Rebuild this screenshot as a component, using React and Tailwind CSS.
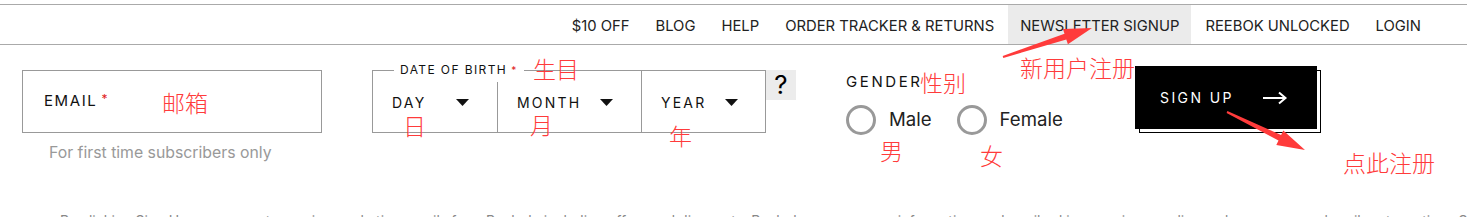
import React from 'react';

const navItems = ['$10 OFF', 'BLOG', 'HELP', 'ORDER TRACKER & RETURNS', 'NEWSLETTER SIGNUP', 'REEBOK UNLOCKED', 'LOGIN'];

const Caret = () => (
    <svg width="13" height="7" viewBox="0 0 13 7" className="shrink-0">
        <polygon points="0,0 13,0 6.5,7" fill="#111" />
    </svg>
);

const Note = ({ x, y, children }) => (
    <span
        className="absolute leading-none text-[23px] text-[#ff3b3b] font-['Noto_Sans_CJK_SC',sans-serif] font-light whitespace-nowrap"
        style={{ left: x, top: y }}
    >
        {children}
    </span>
);

const App = () => {
    return (
        <div className="relative w-[1467px] h-[217px] overflow-hidden bg-white font-['Inter','Liberation_Sans',sans-serif] text-[#222]">
            <div className="h-[4px]" />

            {/* top utility nav */}
            <nav className="h-[41px] border-y border-y-[#aaa] flex justify-end items-stretch pr-[33px] text-[14.8px]">
                {navItems.map((item) => (
                    <div
                        key={item}
                        className={
                            item === 'NEWSLETTER SIGNUP'
                                ? 'flex items-center pt-[3px] px-[12px] mx-[1px] bg-[#ebebeb]'
                                : 'flex items-center pt-[3px] px-[13px]'
                        }
                    >
                        {item}
                    </div>
                ))}
            </nav>

            {/* newsletter form */}
            <div className="flex items-start pt-[21px]">
                <div className="ml-[22px] mt-[4px] w-[300px]">
                    <div className="h-[63px] border border-[#999] flex items-center pl-[21px] text-[15px] tracking-[1.6px] text-[#111]">
                        EMAIL<span className="text-[#e02020] text-[12px] ml-[4px] -mt-[6px]">*</span>
                    </div>
                    <p className="mt-[10px] pl-[27px] text-[15.8px] text-[#999] leading-[20px]">For first time subscribers only</p>
                </div>

                <div className="ml-[50px] mt-[4px] relative w-[394px] h-[63px] border border-[#999] flex text-[14px] tracking-[2.2px] text-[#111]">
                    <span className="absolute -top-[8px] left-[21px] bg-white px-[6px] text-[12px] tracking-[1.4px] leading-[14px]">
                        DATE OF BIRTH<span className="text-[#e02020] text-[10px] ml-[4px]">*</span>
                    </span>
                    <div className="w-[124px] flex items-center justify-between pl-[19px] pr-[28px] pt-[2px]">
                        DAY<Caret />
                    </div>
                    <div className="w-px bg-[#999] mt-[11px]" />
                    <div className="w-[143px] flex items-center justify-between pl-[19px] pr-[28px] pt-[2px]">
                        MONTH<Caret />
                    </div>
                    <div className="w-px bg-[#999]" />
                    <div className="flex-1 flex items-center justify-between pl-[19px] pr-[27px] pt-[2px]">
                        YEAR<Caret />
                    </div>
                </div>
                <div className="mt-[4px] w-[30px] h-[30px] bg-[#ececec] flex items-center justify-center text-[26px] text-black leading-none">?</div>

                <div className="ml-[50px] mt-[4px]">
                    <div className="text-[15px] tracking-[2.6px] leading-[24px] text-[#111]">GENDER</div>
                    <div className="mt-[11px] flex items-center text-[18.6px] text-[#222]">
                        <span className="w-[30px] h-[30px] rounded-full border-[3px] border-[#999]" />
                        <span className="ml-[13px]">Male</span>
                        <span className="ml-[25px] w-[30px] h-[30px] rounded-full border-[3px] border-[#999]" />
                        <span className="ml-[13px]">Female</span>
                    </div>
                </div>

                <button className="ml-auto mr-[150px] w-[182px] h-[63px] bg-black text-white flex items-center pl-[25px] gap-[29px] text-[14px] tracking-[2.4px] shadow-[4px_4px_0_-1px_white,4px_4px_0_0_black]">
                    SIGN UP
                    <svg width="25" height="14" viewBox="0 0 25 14">
                        <path d="M0 7 H22 M16 1.5 L22.5 7 L16 12.5" stroke="white" strokeWidth="2" fill="none" />
                    </svg>
                </button>
            </div>

            <p className="mt-[47px] pl-[60px] text-[14px] text-[#888] whitespace-nowrap">
                By clicking Sign Up, you agree to receive marketing emails from Reebok, including offers and discounts. Reebok may use your information as described in our privacy policy and you may unsubscribe at any time. SMS
            </p>

            {/* red annotations */}
            <Note x={162} y={91}>邮箱</Note>
            <Note x={533} y={57}>生目</Note>
            <Note x={403} y={114}>日</Note>
            <Note x={530} y={113}>月</Note>
            <Note x={669} y={124}>年</Note>
            <Note x={920} y={71}>性别</Note>
            <Note x={880} y={139}>男</Note>
            <Note x={980} y={144}>女</Note>
            <Note x={1020} y={56}>新用户注册</Note>
            <Note x={1343} y={151}>点此注册</Note>
            <svg className="absolute left-0 top-0 pointer-events-none" width="1467" height="217">
                <polygon
                    points="1002.7,56 1064.5,33.8 1062.9,29.1 1092,28 1067.9,44.3 1066.3,39.6 1003.3,58"
                    fill="#ff3b3b"
                />
                <polygon
                    points="1227.4,111.1 1281.1,135 1283.3,130.5 1305,150 1276.3,144.9 1278.5,140.4 1226.6,112.9"
                    fill="#ff3b3b"
                />
            </svg>
        </div>
    );
};

export default App;
